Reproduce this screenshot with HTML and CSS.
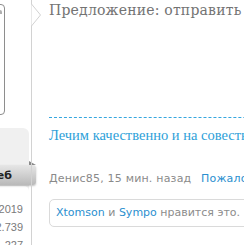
FILE: index.html
```html
<!DOCTYPE html>
<html lang="ru">
<head>
    <meta charset="UTF-8">
    <meta name="viewport" content="width=device-width, initial-scale=1.0">
    <title>Сообщение</title>
    <link rel="stylesheet" href="styles.css">
</head>
<body>

    <div class="message">
        <!-- Left column: user block -->
        <div class="user-col">
            <div class="avatar-holder">
                <div class="avatar"><span class="avatar-img"></span></div>
            </div>
            <div class="user-details">
                <div class="ribbon">Мастер Веб</div>
                <dl class="extra-info">
                    <div class="pair"><dt>Регистрация:</dt><dd>2019</dd></div>
                    <div class="pair"><dt>Сообщения:</dt><dd>2.739</dd></div>
                    <div class="pair"><dt>Симпатии:</dt><dd>1.227</dd></div>
                </dl>
            </div>
        </div>

        <!-- Right column: message content -->
        <div class="message-main">
            <svg class="arrow" width="11" height="23" viewBox="0 0 11 23">
                <path d="M0.5 0 L9.5 11 L0.5 22" fill="#fff" stroke="#d2d2d2" stroke-width="1"/>
            </svg>

            <div class="message-text">Предложение: отправить новость на сайт</div>

            <div class="signature">Лечим качественно и на совесть</div>

            <div class="meta">
                <span class="date">Денис85, 15 мин. назад</span>
                <a href="#" class="report">Пожаловаться</a>
            </div>

            <div class="likes">
                <a href="#">Xtomson</a> и <a href="#">Sympo</a> нравится это.
            </div>
        </div>
    </div>

</body>
</html>
```

FILE: styles.css
```css
body {
    margin: 0;
    font-family: "DejaVu Sans", Verdana, sans-serif;
    background-color: #fff;
    overflow: hidden;
}
a {
    color: #2b8fcf;
    text-decoration: none;
}
.message {
    display: flex;
    width: 640px;
}

/* User block (mostly off screen on the left) */
.user-col {
    flex: none;
    width: 130px;
    margin-left: -101px;
}
.avatar-holder {
    height: 128px;
    padding-top: 4px;
    box-sizing: border-box;
}
.avatar {
    width: 106px;
    height: 111px;
    border: 1px solid #8e8e8e;
    border-radius: 4px;
    box-sizing: border-box;
    padding: 5px 2px 0 0;
}
.avatar-img {
    display: block;
    margin-left: auto;
    width: 4px;
    height: 4px;
    background: #b0b0b0;
    border-radius: 0 2px 0 0;
}
.user-details {
    background-color: #f0f0f0;
    border-radius: 0 6px 0 0;
    padding-top: 37px;
}
.ribbon {
    position: relative;
    height: 20px;
    line-height: 21px;
    margin-right: -7px;
    padding-right: 24px;
    text-align: right;
    font-size: 11px;
    font-weight: bold;
    color: #222;
    background: linear-gradient(to bottom, #e6e6e6, #b9b9b9);
    border-radius: 0 3px 3px 0;
    box-shadow: 0 1px 2px rgba(0, 0, 0, 0.25);
}
.ribbon::after {
    content: "";
    position: absolute;
    right: 0;
    top: -4px;
    border-left: 7px solid #8a8a8a;
    border-top: 4px solid transparent;
}
.extra-info {
    margin: 1px 0 0;
    padding: 14px 6px 20px 8px;
    background-color: #fff;
    border-radius: 0 5px 0 0;
    font-family: "Liberation Sans", Arial, sans-serif;
    font-size: 11px;
    line-height: 18px;
    color: #7a7a7a;
}
.pair {
    display: flex;
    justify-content: space-between;
}
.extra-info dd {
    margin: 0;
}

/* Message content */
.message-main {
    position: relative;
    flex: 1;
    margin-left: 2px;
    border-left: 1px solid #d2d2d2;
    padding-left: 17px;
    white-space: nowrap;
}
.arrow {
    position: absolute;
    left: -1px;
    top: 4px;
}
.message-text {
    height: 114px;
    padding-top: 1px;
    box-sizing: border-box;
    font-family: "DejaVu Serif", Georgia, serif;
    font-size: 14px;
    letter-spacing: 0.2px;
    line-height: 18px;
    color: #737373;
}
.signature {
    border-top: 1px dashed #35a6df;
    margin-top: 3px;
    padding-top: 8px;
    font-family: "Liberation Serif", "Times New Roman", serif;
    font-size: 14.5px;
    line-height: 18px;
    color: #2e9fd9;
}
.meta {
    margin-top: 27px;
    font-size: 11px;
    letter-spacing: 0.2px;
    line-height: 16px;
    color: #8a8a8a;
}
.report {
    margin-left: 6px;
}
.likes {
    margin-top: 12px;
    width: 400px;
    padding: 5px 6px;
    border: 1px solid #dadada;
    border-radius: 5px;
    font-size: 11px;
    line-height: 16px;
    color: #8c8c8c;
}
```
